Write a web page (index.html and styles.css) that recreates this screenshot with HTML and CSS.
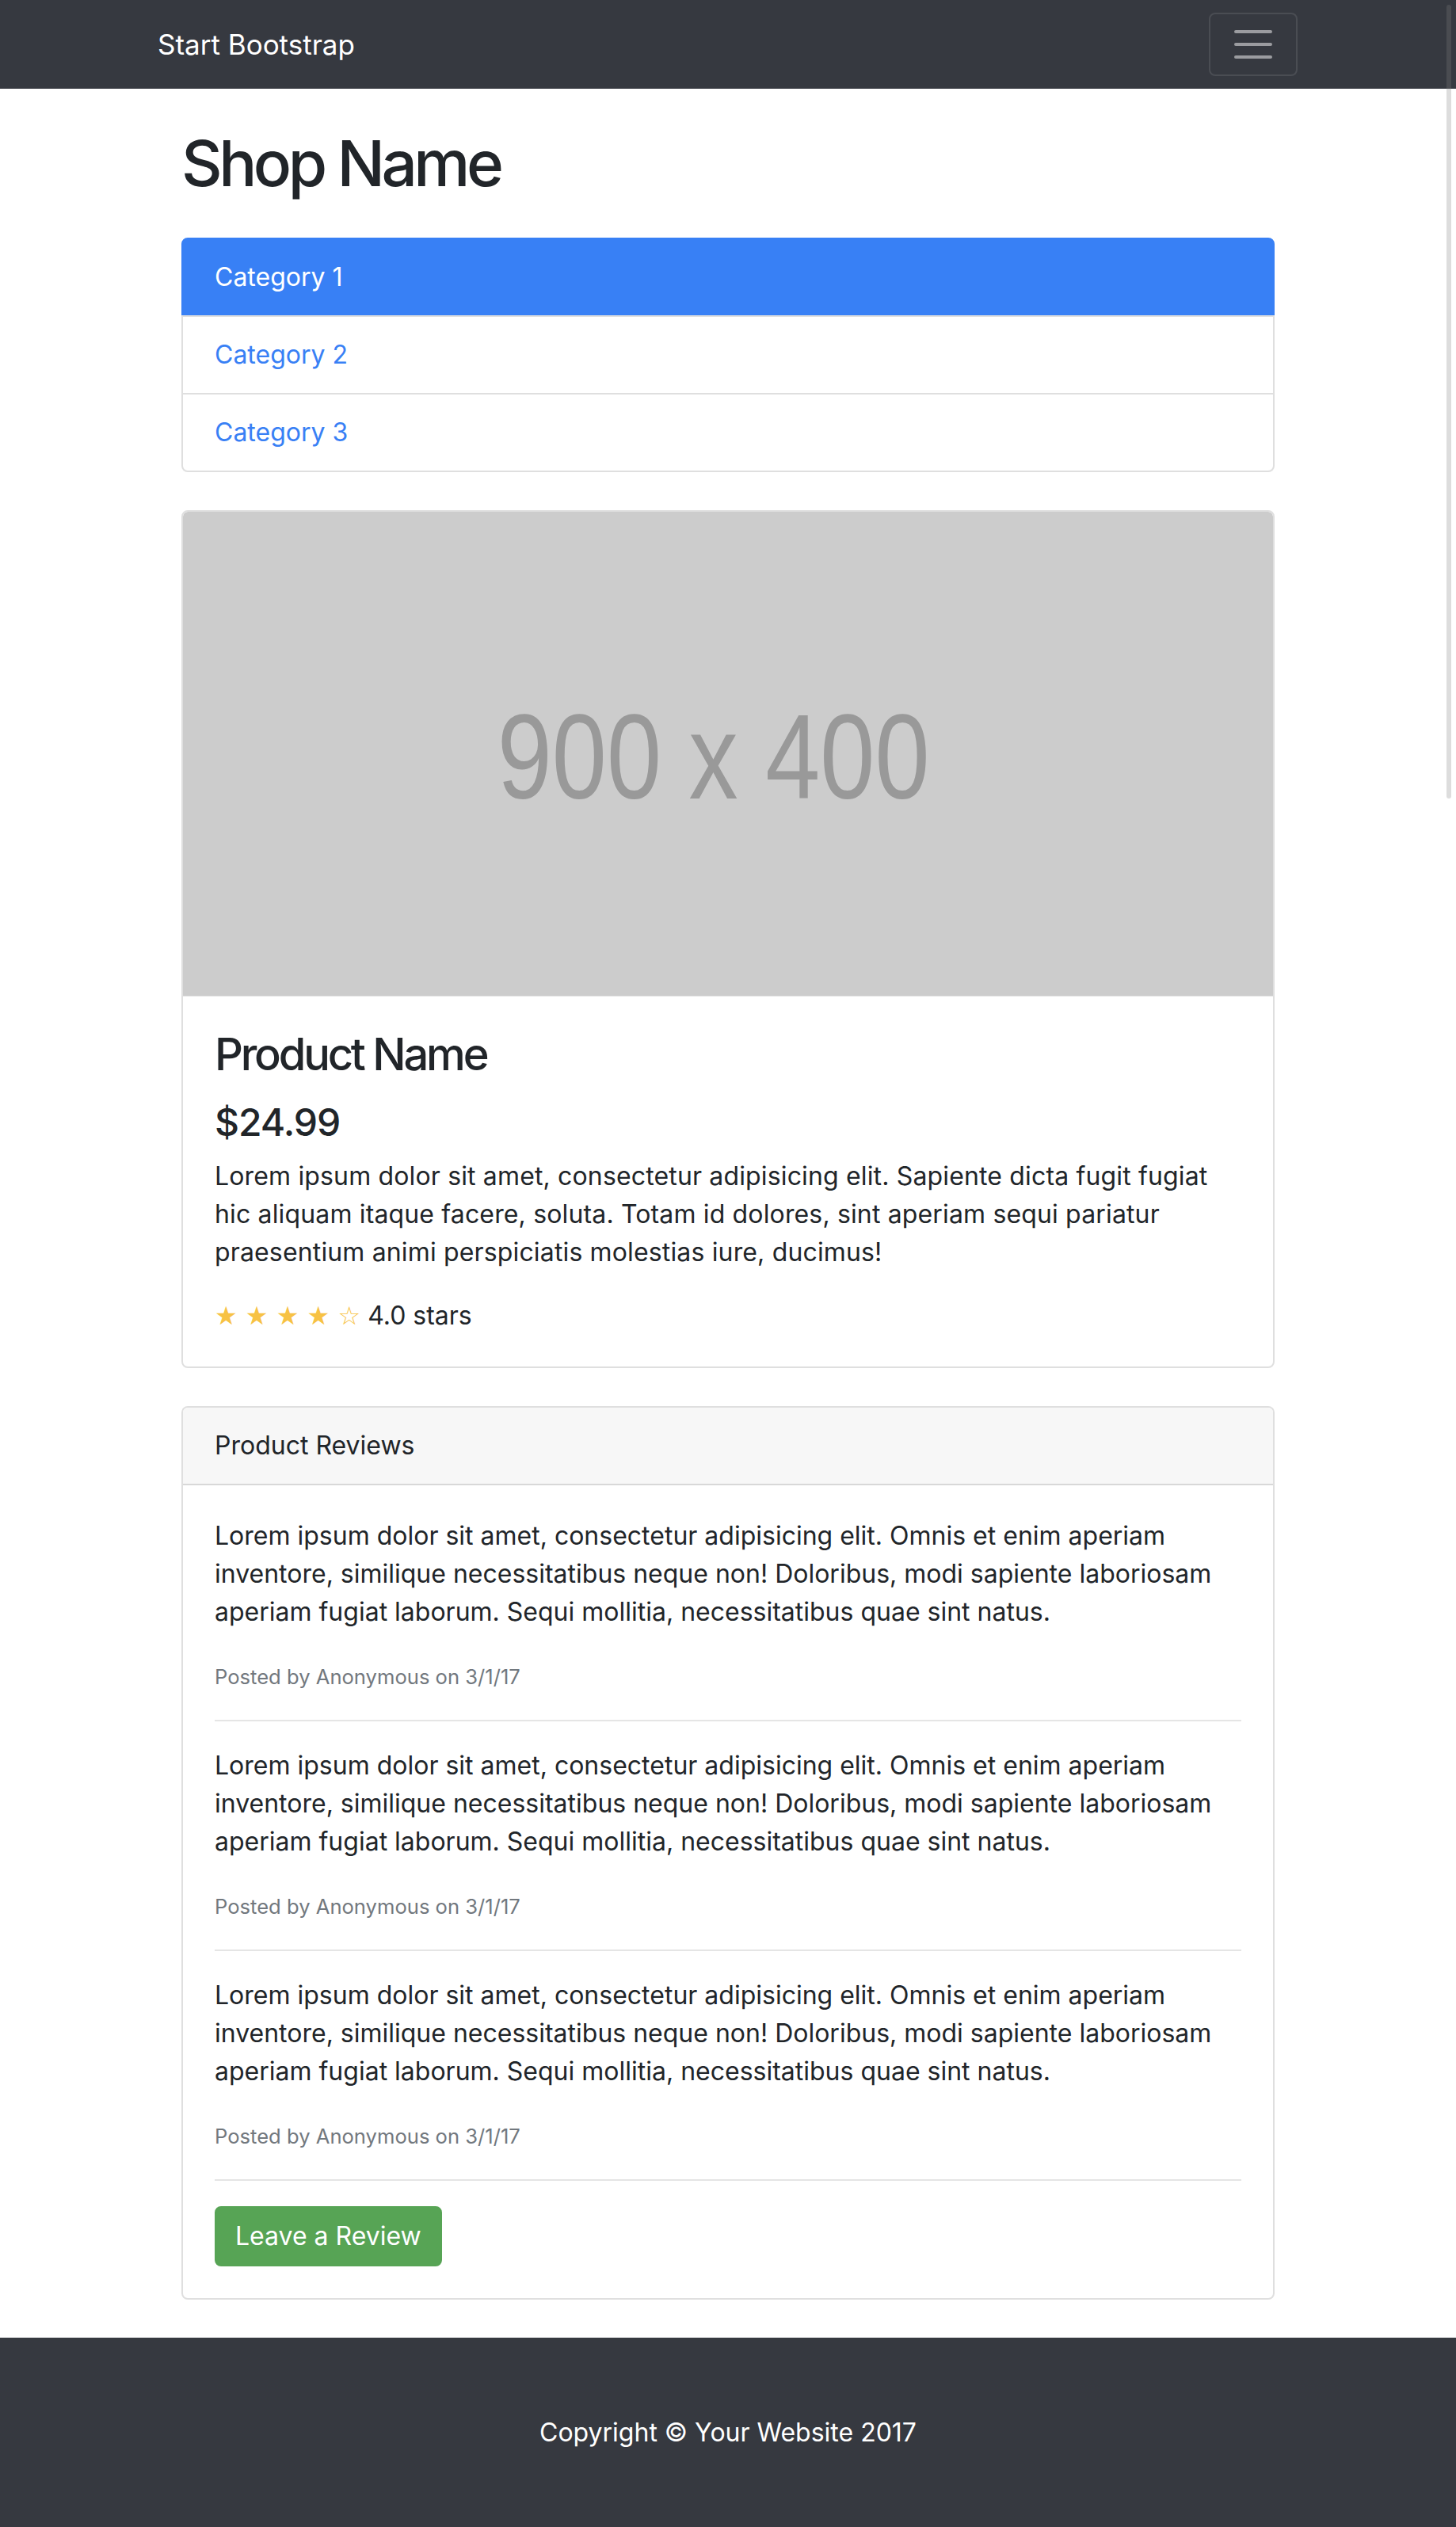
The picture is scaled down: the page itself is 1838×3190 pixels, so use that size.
FILE: index.html
```html
<!DOCTYPE html>
<html lang="en">
<head>
<meta charset="utf-8">
<title>Shop Item - Start Bootstrap Template</title>
<link rel="stylesheet" href="styles.css">
</head>
<body>
<nav class="navbar">
  <div class="nav-container">
    <a class="brand" href="#">Start Bootstrap</a>
    <button class="toggler" type="button" aria-label="Toggle navigation">
      <svg class="toggler-icon" viewBox="0 0 30 30" width="60" height="60"><path d="M4 7h22M4 15h22M4 23h22" stroke="rgba(255,255,255,0.5)" stroke-width="2" stroke-linecap="round" fill="none"/></svg>
    </button>
  </div>
</nav>

<main class="container">
  <h1 class="shop-title">Shop Name</h1>
  <div class="list-group">
    <a href="#" class="list-item active">Category 1</a>
    <a href="#" class="list-item">Category 2</a>
    <a href="#" class="list-item">Category 3</a>
  </div>

  <div class="card">
    <svg class="card-img" viewBox="0 0 900 400" preserveAspectRatio="none">
      <rect width="900" height="400" fill="#cccccc"/>
      <text x="438" y="237" text-anchor="middle" font-family="Liberation Sans, Arial, sans-serif" font-size="100" fill="#999999" textLength="357" lengthAdjust="spacingAndGlyphs">900 x 400</text>
    </svg>
    <div class="card-body">
      <h3 class="card-title">Product Name</h3>
      <h4 class="price">$24.99</h4>
      <p class="text product-text">Lorem ipsum dolor sit amet, consectetur adipisicing elit. Sapiente dicta fugit fugiat hic aliquam itaque facere, soluta. Totam id dolores, sint aperiam sequi pariatur praesentium animi perspiciatis molestias iure, ducimus!</p>
      <div class="rating"><span class="stars">&#9733; &#9733; &#9733; &#9733; &#9734;</span> 4.0 stars</div>
    </div>
  </div>

  <div class="card reviews">
    <div class="card-header">Product Reviews</div>
    <div class="card-body">
      <p class="text">Lorem ipsum dolor sit amet, consectetur adipisicing elit. Omnis et enim aperiam inventore, similique necessitatibus neque non! Doloribus, modi sapiente laboriosam aperiam fugiat laborum. Sequi mollitia, necessitatibus quae sint natus.</p>
      <small class="muted">Posted by Anonymous on 3/1/17</small>
      <hr class="divider">
      <p class="text">Lorem ipsum dolor sit amet, consectetur adipisicing elit. Omnis et enim aperiam inventore, similique necessitatibus neque non! Doloribus, modi sapiente laboriosam aperiam fugiat laborum. Sequi mollitia, necessitatibus quae sint natus.</p>
      <small class="muted">Posted by Anonymous on 3/1/17</small>
      <hr class="divider">
      <p class="text">Lorem ipsum dolor sit amet, consectetur adipisicing elit. Omnis et enim aperiam inventore, similique necessitatibus neque non! Doloribus, modi sapiente laboriosam aperiam fugiat laborum. Sequi mollitia, necessitatibus quae sint natus.</p>
      <small class="muted">Posted by Anonymous on 3/1/17</small>
      <hr class="divider">
      <a href="#" class="btn-success">Leave a Review</a>
    </div>
  </div>
</main>

<footer class="footer">
  <p class="copyright">Copyright &copy; Your Website 2017</p>
</footer>

<div class="scroll-thumb"></div>
</body>
</html>
```

FILE: styles.css
```css
* { box-sizing: border-box; }

html, body {
  margin: 0;
  padding: 0;
}

body {
  font-family: Inter, "Noto Sans", "Liberation Sans", sans-serif;
  font-size: 32px;
  line-height: 1.5;
  color: #212529;
  background: #ffffff;
}

a { text-decoration: none; }

/* Navbar */
.navbar {
  background: #363940;
  padding: 16px 0;
}

.nav-container {
  width: 1440px;
  margin: 0 auto;
  display: flex;
  align-items: center;
  justify-content: space-between;
}

.brand {
  color: #ffffff;
  font-size: 35px;
  line-height: 60px;
  padding: 10px 0;
  white-space: nowrap;
}

.toggler {
  width: 112px;
  height: 80px;
  padding: 8px 24px;
  margin-right: 1px;
  background: transparent;
  border: 2px solid rgba(255, 255, 255, 0.1);
  border-radius: 8px;
  display: flex;
  align-items: center;
  justify-content: center;
}

.toggler-icon { display: block; }

/* Main */
.container {
  width: 1440px;
  margin: 0 auto;
  padding: 0 30px;
}

.shop-title {
  font-size: 80px;
  font-weight: 500;
  letter-spacing: -4.5px;
  line-height: 92px;
  margin: 48px 0 48px;
}

.list-group {
  display: flex;
  flex-direction: column;
  margin-bottom: 48px;
}

.list-item {
  display: block;
  padding: 24px 40px;
  border: 2px solid rgba(0, 0, 0, 0.125);
  margin-bottom: -2px;
  color: #3880f5;
  line-height: 48px;
  background: #ffffff;
}

.list-item:first-child {
  border-top-left-radius: 8px;
  border-top-right-radius: 8px;
}

.list-item:last-child {
  margin-bottom: 0;
  border-bottom-left-radius: 8px;
  border-bottom-right-radius: 8px;
}

.list-item.active {
  background: #3880f5;
  border-color: #3880f5;
  color: #ffffff;
}

/* Cards */
.card {
  border: 2px solid rgba(0, 0, 0, 0.125);
  border-radius: 8px;
  margin-bottom: 48px;
  overflow: hidden;
}

.card-img {
  display: block;
  width: 100%;
  height: auto;
  aspect-ratio: 900 / 400;
  border-top-left-radius: 6px;
  border-top-right-radius: 6px;
}

.card-body {
  padding: 40px;
}

.card-title {
  font-size: 56px;
  font-weight: 500;
  letter-spacing: -3.2px;
  line-height: 66px;
  margin: 0 0 24px;
}

.price {
  font-size: 48px;
  font-weight: 500;
  letter-spacing: -1px;
  line-height: 57px;
  margin: 0 0 16px;
}

.text {
  margin: 0 0 32px;
}

.product-text {
  letter-spacing: 0.15px;
}

.rating {
  height: 48px;
  line-height: 48px;
}

.stars {
  color: #f7c244;
  font-family: "DejaVu Sans", sans-serif;
  font-size: 32px;
  line-height: 1;
}

.card-header {
  padding: 24px 40px;
  background: #f7f7f7;
  border-bottom: 2px solid rgba(0, 0, 0, 0.125);
  line-height: 48px;
}

.muted {
  color: #72787e;
  font-size: 25.6px;
}

.divider {
  margin: 32px 0;
  border: 0;
  border-top: 2px solid rgba(0, 0, 0, 0.1);
  height: 0;
}

.btn-success {
  display: inline-block;
  padding: 12px 24px;
  line-height: 48px;
  font-size: 32px;
  color: #ffffff;
  background: #57a455;
  border: 2px solid #57a455;
  border-radius: 8px;
}

/* Footer */
.footer {
  background: #363940;
  padding: 96px 0;
}

.copyright {
  margin: 0;
  text-align: center;
  color: #ffffff;
  line-height: 48px;
}

/* overlay scrollbar thumb */
.scroll-thumb {
  position: fixed;
  top: 6px;
  right: 6px;
  width: 6px;
  height: 1002px;
  border-radius: 3px;
  background: rgba(128, 128, 128, 0.27);
}
```
